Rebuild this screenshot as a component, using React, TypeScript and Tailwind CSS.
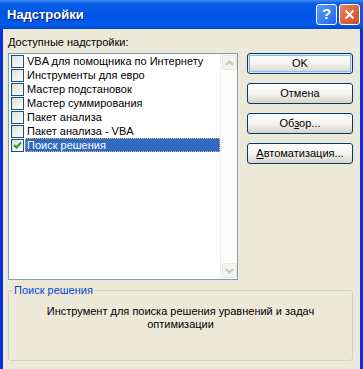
import React from 'react'

const items = [
    { name: 'VBA для помощника по Интернету', checked: false },
    { name: 'Инструменты для евро', checked: false },
    { name: 'Мастер подстановок', checked: false },
    { name: 'Мастер суммирования', checked: false },
    { name: 'Пакет анализа', checked: false },
    { name: 'Пакет анализа - VBA', checked: false },
    { name: 'Поиск решения', checked: true },
]

const font = { fontFamily: '"Liberation Sans", Arial, sans-serif' }

function CheckBox({ checked }: { checked: boolean }) {
    return (
        <div className="w-[13px] h-[13px] shrink-0 border border-[#1c5180] bg-gradient-to-br from-[#dcdcd7] to-[#ffffff] flex items-center justify-center">
            {checked && (
                <svg width="9" height="9" viewBox="0 0 9 9">
                    <path d="M1 4 L3.5 6.5 L8 1.5" stroke="#21a121" strokeWidth="2" fill="none" />
                </svg>
            )}
        </div>
    )
}

function ScrollArrow({ up }: { up: boolean }) {
    return (
        <div className="w-[15px] h-[15px] mx-auto rounded-[2px] border border-[#e8e8e0] bg-[#f3f3ef] flex items-center justify-center">
            <svg width="9" height="6" viewBox="0 0 9 6">
                <path d={up ? 'M1 5 L4.5 1.5 L8 5' : 'M1 1 L4.5 4.5 L8 1'} stroke="#c9c7ba" strokeWidth="2" fill="none" />
            </svg>
        </div>
    )
}

function XpButton({ children, isDefault }: { children: React.ReactNode, isDefault?: boolean }) {
    return (
        <button
            className={
                'w-[106px] h-[21px] rounded-[3px] border border-[#003c74] bg-gradient-to-b from-[#ffffff] via-[#f4f3ee] to-[#d9d4c8] text-[11px] text-black leading-none ' +
                (isDefault ? 'shadow-[inset_0_0_0_1px_#cee7ff,inset_0_0_0_2px_#98b8ea]' : '')
            }
        >
            {children}
        </button>
    )
}

export default function App() {
    return (
        <div className="w-[363px] h-[369px] overflow-hidden flex flex-col bg-[#ece9d8]" style={font}>
            {/* Title bar */}
            <div className="h-[29px] shrink-0 flex items-center pl-[7px] pr-[3px] bg-[linear-gradient(to_bottom,#3d8ff7_0%,#0a5de6_12%,#0055e5_50%,#005ae9_85%,#0048d0_100%)]">
                <span className="text-white font-bold text-[13px] flex-1 [text-shadow:1px_1px_0_#0a1883]">Надстройки</span>
                <div className="flex gap-[2px]">
                    <div className="w-[21px] h-[21px] rounded-[3px] border border-white bg-gradient-to-br from-[#5b9cfb] to-[#2164e6] flex items-center justify-center text-white font-bold text-[15px]">?</div>
                    <div className="w-[21px] h-[21px] rounded-[3px] border border-white bg-gradient-to-br from-[#e9825e] to-[#d2461e] flex items-center justify-center">
                        <svg width="11" height="11" viewBox="0 0 11 11">
                            <path d="M1.5 1.5 L9.5 9.5 M9.5 1.5 L1.5 9.5" stroke="#ffffff" strokeWidth="2" />
                        </svg>
                    </div>
                </div>
            </div>

            {/* Client area */}
            <div className="flex-1 flex border-l-[3px] border-r-[3px] border-[#0831d9]">
                <div className="flex-1 flex flex-col pl-[5px] pr-[4px] pt-[7px]">
                    <div className="text-[11px] leading-[13px] text-black mb-[4px]">
                        <span className="underline">Д</span>оступные надстройки:
                    </div>

                    <div className="flex gap-[9px]">
                        {/* List box */}
                        <div className="w-[230px] h-[227px] border border-[#7f9db9] bg-white flex">
                            <div className="flex-1 flex flex-col">
                                {items.map((item, index) => (
                                    <div key={index} className="h-[14px] flex items-center pl-[2px]">
                                        <CheckBox checked={item.checked} />
                                        <span
                                            className={
                                                'ml-[1px] flex-1 h-[14px] pl-[1px] text-[11px] leading-[12px] whitespace-nowrap ' +
                                                (item.checked ? 'bg-[#316ac5] text-white border border-dotted border-[#e8b060]' : 'text-black border border-transparent')
                                            }
                                        >
                                            {item.name}
                                        </span>
                                    </div>
                                ))}
                            </div>
                            <div className="w-[17px] border-l border-[#f0f0ea] bg-[#fcfcfa] flex flex-col justify-between py-[1px]">
                                <ScrollArrow up={true} />
                                <ScrollArrow up={false} />
                            </div>
                        </div>

                        {/* Buttons */}
                        <div className="flex flex-col gap-[9px]">
                            <XpButton isDefault>OK</XpButton>
                            <XpButton>Отмена</XpButton>
                            <XpButton>Об<span className="underline">з</span>ор...</XpButton>
                            <XpButton><span className="underline">А</span>втоматизация...</XpButton>
                        </div>
                    </div>

                    {/* Group box */}
                    <fieldset className="mt-[4px] w-[345px] h-[77px] border border-[#d0d0bf] rounded-[3px] px-[4px]">
                        <legend className="px-[1px] text-[11px] leading-[13px] text-[#0046d5]">Поиск решения</legend>
                        <div className="mt-[8px] text-center text-[11px] leading-[13px] text-black px-[30px]">
                            Инструмент для поиска решения уравнений и задач оптимизации
                        </div>
                    </fieldset>
                </div>
            </div>
        </div>
    )
}
